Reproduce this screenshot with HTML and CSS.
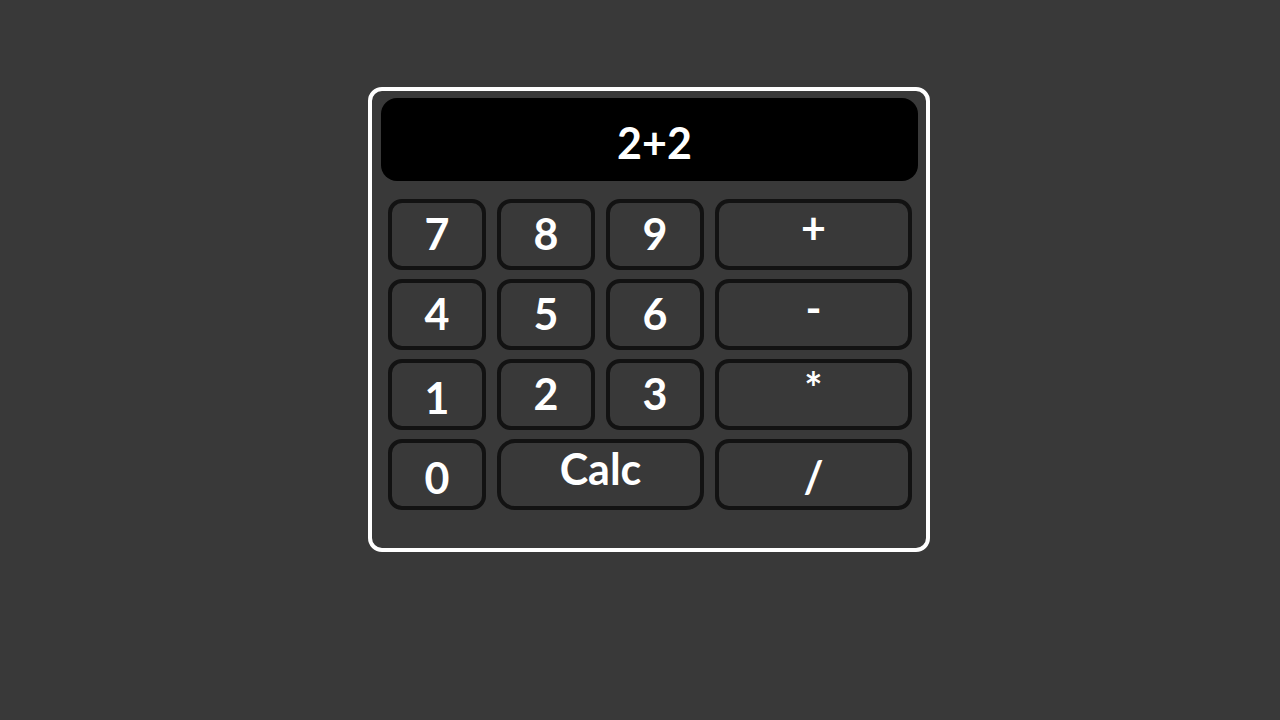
FILE: index.html
```html
<!DOCTYPE html>
<html>
<head>
<meta charset="utf-8">
<link rel="stylesheet" href="styles.css">
</head>
<body>
<div class="calc">
  <div class="display">2+2</div>
  <div class="keys">
    <div class="key">7</div>
    <div class="key">8</div>
    <div class="key">9</div>
    <div class="key op">+</div>
    <div class="key">4</div>
    <div class="key">5</div>
    <div class="key">6</div>
    <div class="key op">-</div>
    <div class="key low">1</div>
    <div class="key">2</div>
    <div class="key">3</div>
    <div class="key op">*</div>
    <div class="key low">0</div>
    <div class="key wide">Calc</div>
    <div class="key op slash">/</div>
  </div>
</div>
</body>
</html>
```
FILE: styles.css
```css
html, body {
  margin: 0;
  padding: 0;
  background: #393939;
  width: 1280px;
  height: 720px;
  overflow: hidden;
}
body {
  font-family: Lato, "Liberation Sans", sans-serif;
  font-weight: 700;
  color: #ffffff;
}
.calc {
  box-sizing: border-box;
  margin: 87px 0 0 368px;
  width: 562px;
  height: 465px;
  border: 4px solid #ffffff;
  border-radius: 14px;
  padding: 7px 9px 0 9px;
}
.display {
  box-sizing: border-box;
  width: 537px;
  height: 83px;
  background: #000000;
  border-radius: 16px;
  display: flex;
  align-items: center;
  justify-content: center;
  font-size: 43px;
  padding-left: 10px;
  padding-top: 6px;
}
.keys {
  margin: 18px 0 0 7px;
  display: grid;
  grid-template-columns: 98px 98px 98px 197px;
  grid-auto-rows: 71px;
  column-gap: 11px;
  row-gap: 9px;
}
.key {
  box-sizing: border-box;
  border: 4px solid #121212;
  border-radius: 14px;
  display: flex;
  align-items: center;
  justify-content: center;
  font-size: 43px;
  padding-bottom: 2px;
}
.key.low {
  padding-bottom: 0;
  padding-top: 6px;
}
.op {
  padding-top: 0;
  padding-bottom: 14px;
}
.op.slash {
  padding-bottom: 0;
  padding-top: 4px;
}
.wide {
  grid-column: span 2;
  border-radius: 18px;
  padding-top: 0;
  padding-bottom: 12px;
}
```
